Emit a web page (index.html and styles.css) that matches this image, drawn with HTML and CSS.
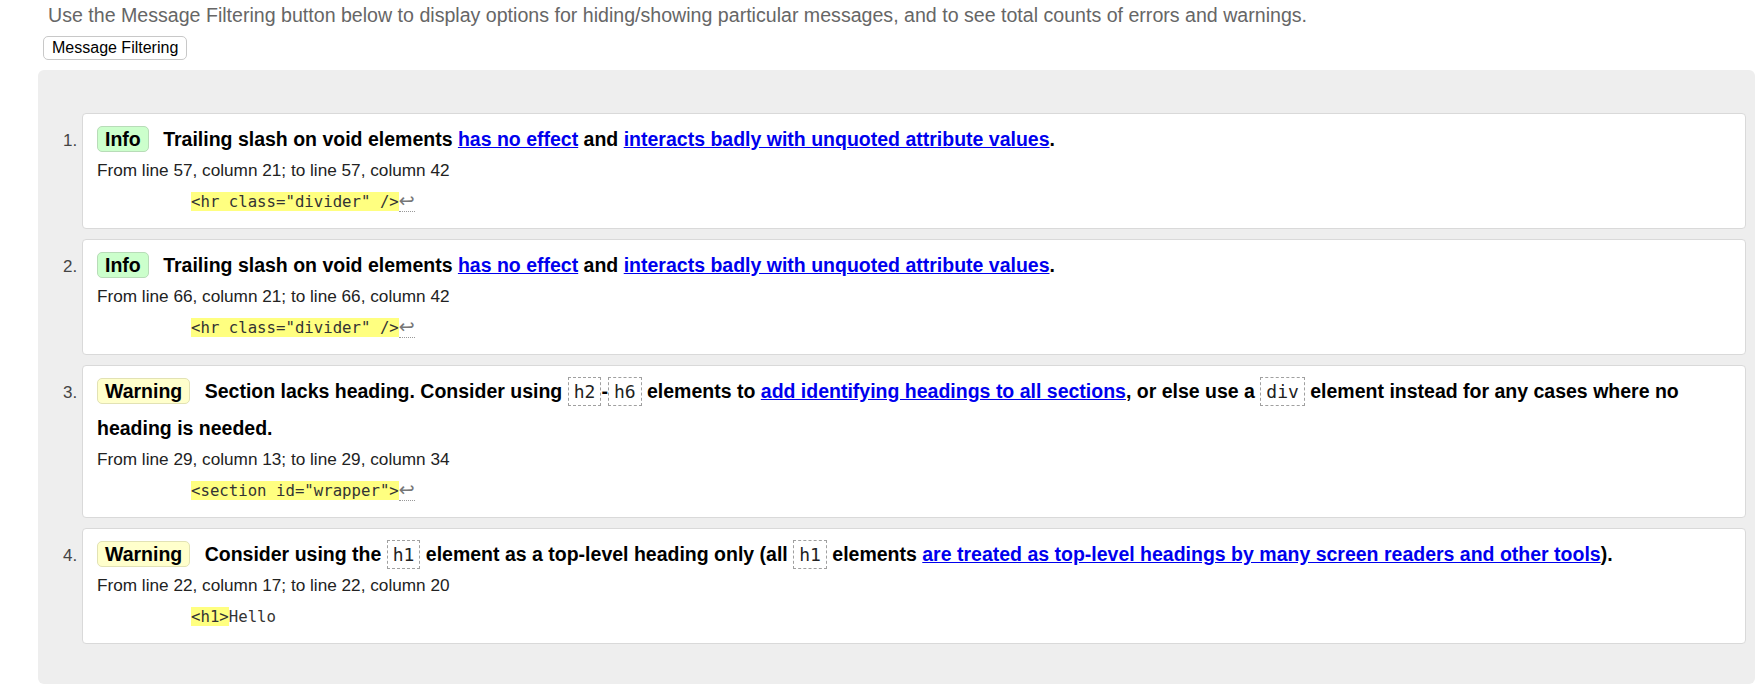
FILE: index.html
```html
<!DOCTYPE html>
<html lang="en">
<head>
<meta charset="utf-8">
<title>Nu Html Checker results</title>
<link rel="stylesheet" href="styles.css">
</head>
<body>
<div class="page">
  <p class="intro">Use the Message Filtering button below to display options for hiding/showing particular messages, and to see total counts of errors and warnings.</p>
  <button class="filter-btn" type="button">Message Filtering</button>
  <div class="results">
    <ol class="messages">
      <li class="msg">
        <p class="text"><strong class="badge info">Info</strong> Trailing slash on void elements <a href="#">has no effect</a> and <a href="#">interacts badly with unquoted attribute values</a>.</p>
        <p class="location">From line 57, column 21; to line 57, column 42</p>
        <p class="extract"><code><b>&lt;hr class="divider" /&gt;</b><span class="lf">↩</span></code></p>
      </li>
      <li class="msg">
        <p class="text"><strong class="badge info">Info</strong> Trailing slash on void elements <a href="#">has no effect</a> and <a href="#">interacts badly with unquoted attribute values</a>.</p>
        <p class="location">From line 66, column 21; to line 66, column 42</p>
        <p class="extract"><code><b>&lt;hr class="divider" /&gt;</b><span class="lf">↩</span></code></p>
      </li>
      <li class="msg">
        <p class="text"><strong class="badge warning">Warning</strong> Section lacks heading. Consider using <code class="tag">h2</code>-<code class="tag">h6</code> elements to <a href="#">add identifying headings to all sections</a>, or else use a <code class="tag">div</code> element instead for any cases where no heading is needed.</p>
        <p class="location">From line 29, column 13; to line 29, column 34</p>
        <p class="extract"><code><b>&lt;section id="wrapper"&gt;</b><span class="lf">↩</span></code></p>
      </li>
      <li class="msg">
        <p class="text"><strong class="badge warning">Warning</strong> Consider using the <code class="tag">h1</code> element as a top-level heading only (all <code class="tag">h1</code> elements <a href="#">are treated as top-level headings by many screen readers and other tools</a>).</p>
        <p class="location">From line 22, column 17; to line 22, column 20</p>
        <p class="extract"><code><b>&lt;h1&gt;</b>Hello</code></p>
      </li>
    </ol>
  </div>
</div>
</body>
</html>
```

FILE: styles.css
```css
html, body {
  margin: 0;
  padding: 0;
  background: #fff;
}

body {
  font-family: "Liberation Sans", Arial, sans-serif;
  color: #000;
}

.page {
  padding: 0 3px 0 38px;
}

.intro {
  margin: 1px 0 0 10px;
  font-size: 19.6px;
  line-height: 28px;
  color: #666;
}

.filter-btn {
  display: block;
  margin: 7px 0 0 5px;
  padding: 1px 8px;
  font-family: "Liberation Sans", Arial, sans-serif;
  font-size: 16px;
  line-height: 20px;
  color: #000;
  background: #fff;
  border: 1px solid #c8c8c8;
  border-radius: 5px;
}

.results {
  margin-top: 10px;
  padding: 43px 9px 40px 44px;
  background: #eeeeee;
  border-radius: 6px;
}

.messages {
  margin: 0;
  padding: 0;
  list-style: decimal outside;
}

.msg {
  margin: 0 0 10px;
  padding: 7px 14px 13px;
  background: #fff;
  border: 1px solid #d9d9d9;
  border-radius: 4px;
  font-size: 17px;
  color: #333;
}

.msg:last-child {
  margin-bottom: 0;
}

.msg::marker {
  font-size: 17px;
  color: #444;
}

.text {
  margin: 0;
  font-size: 19.5px;
  font-weight: bold;
  line-height: 37px;
  color: #000;
}

.text a {
  color: #0000ee;
  text-decoration: underline;
}

.badge {
  display: inline-block;
  margin-right: 9px;
  padding: 1px 7px;
  line-height: 22px;
  border: 1px solid;
  border-radius: 5px;
  font-weight: bold;
  color: #000;
}

.badge.info {
  background: #ccffcc;
  border-color: #b8dcb8;
}

.badge.warning {
  background: #ffffcc;
  border-color: #e2e2b4;
}

.tag {
  display: inline-block;
  font-family: "DejaVu Sans Mono", "Liberation Mono", monospace;
  font-size: 18px;
  font-weight: normal;
  line-height: 21px;
  padding: 3px 5px;
  border: 1px dashed #a0a0a0;
  color: #222;
}

.location {
  margin: 0;
  font-size: 17.2px;
  line-height: 25px;
  color: #222;
}

.extract {
  margin: 6px 0 0;
  padding-left: 94px;
  line-height: 26px;
}

.extract code {
  font-family: "DejaVu Sans Mono", "Liberation Mono", monospace;
  font-size: 15.7px;
  color: #333;
}

.extract b {
  font-weight: normal;
  background: #ffff80;
}

.lf {
  font-family: "DejaVu Sans", sans-serif;
  font-size: 19px;
  line-height: 18px;
  color: #777;
  border-bottom: 1px dotted #999;
}
```
